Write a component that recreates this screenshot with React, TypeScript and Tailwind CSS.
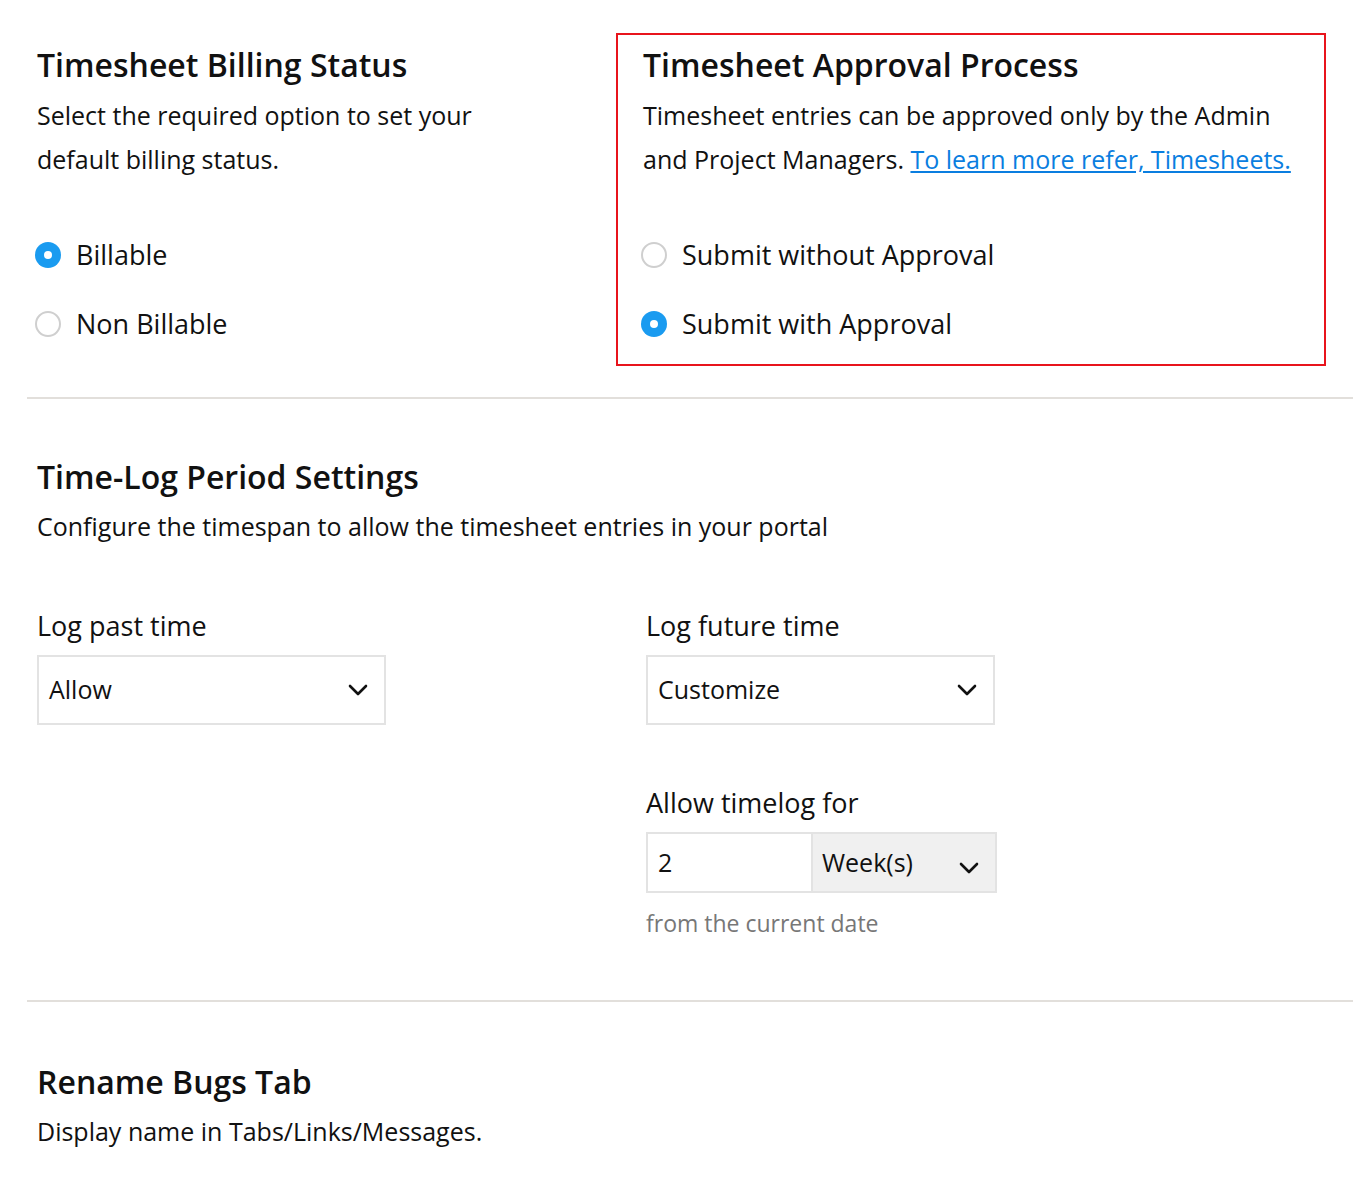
import React from "react";

function Radio({ checked }: { checked: boolean }) {
  return checked ? (
    <span className="flex h-[26px] w-[26px] shrink-0 items-center justify-center rounded-full bg-[#1a9bf0]">
      <span className="h-[8px] w-[8px] rounded-full bg-white" />
    </span>
  ) : (
    <span className="h-[26px] w-[26px] shrink-0 rounded-full border-2 border-[#cfcfcf] bg-white" />
  );
}

function Chevron({ className = "" }: { className?: string }) {
  return (
    <svg className={className} width="20" height="12" viewBox="0 0 20 12" fill="none">
      <path d="M2 2l8 8 8-8" stroke="#111" strokeWidth="2.6" strokeLinecap="round" strokeLinejoin="round" />
    </svg>
  );
}

function RadioRow({ checked, label }: { checked: boolean; label: string }) {
  return (
    <div className="-ml-[2px] flex h-[44px] items-center gap-[15px]">
      <Radio checked={checked} />
      <span className="text-[27px] leading-[44px]">{label}</span>
    </div>
  );
}

export default function App() {
  return (
    <div
      className="min-h-[1193px] bg-white pl-[27px] pr-[7px] text-[#111]"
      style={{ fontFamily: "'Open Sans', Lato, sans-serif" }}
    >
      {/* Section 1 */}
      <div className="flex pt-[33px]">
        <div className="w-[589px] pl-[10px] pt-[14px]">
          <h2 className="text-[32px] font-semibold leading-[36px]">Timesheet Billing Status</h2>
          <p className="mt-[10px] text-[25px] leading-[44px]">
            Select the required option to set your
            <br />
            default billing status.
          </p>
          <div className="mt-[52px] flex flex-col gap-[25px]">
            <RadioRow checked label="Billable" />
            <RadioRow checked={false} label="Non Billable" />
          </div>
        </div>
        <div className="w-[710px] border-2 border-[#e8141c] pb-[18px] pl-[25px] pt-[12px]">
          <h2 className="text-[32px] font-semibold leading-[36px]">Timesheet Approval Process</h2>
          <p className="mt-[10px] text-[25px] leading-[44px]">
            Timesheet entries can be approved only by the Admin
            <br />
            and Project Managers.{" "}
            <a href="#" className="text-[#0a7ee0] underline">
              To learn more refer, Timesheets.
            </a>
          </p>
          <div className="mt-[52px] flex flex-col gap-[25px]">
            <RadioRow checked={false} label="Submit without Approval" />
            <RadioRow checked label="Submit with Approval" />
          </div>
        </div>
      </div>

      <div className="mt-[31px] h-[2px] bg-[#e2dfdb]" />

      {/* Section 2 */}
      <div className="pl-[10px] pt-[60px]">
        <h2 className="text-[32px] font-semibold leading-[36px]">Time-Log Period Settings</h2>
        <p className="mt-[9px] text-[25px] leading-[44px]">
          Configure the timespan to allow the timesheet entries in your portal
        </p>
        <div className="mt-[56px] grid grid-cols-[609px_1fr]">
          <div>
            <div className="text-[27px] leading-[44px]">Log past time</div>
            <div className="mt-[7px] flex h-[70px] w-[349px] items-center justify-between border-2 border-[#e3e3e3] pl-[10px] pr-[16px]">
              <span className="text-[25px]">Allow</span>
              <Chevron />
            </div>
          </div>
          <div>
            <div className="text-[27px] leading-[44px]">Log future time</div>
            <div className="mt-[7px] flex h-[70px] w-[349px] items-center justify-between border-2 border-[#e3e3e3] pl-[10px] pr-[16px]">
              <span className="text-[25px]">Customize</span>
              <Chevron />
            </div>
            <div className="mt-[56px] text-[27px] leading-[44px]">Allow timelog for</div>
            <div className="mt-[7px] flex h-[61px] w-[351px]">
              <div className="flex w-[167px] items-center border-2 border-[#e3e3e3] pl-[10px] text-[25px]">2</div>
              <div className="flex flex-1 items-center justify-between border-2 border-l-0 border-[#e3e3e3] bg-[#f0f0f0] pl-[9px] pr-[16px]">
                <span className="text-[25px]">Week(s)</span>
                <Chevron className="mt-[10px]" />
              </div>
            </div>
            <div className="mt-[8px] text-[23px] leading-[44px] text-[#777]">from the current date</div>
          </div>
        </div>
      </div>

      <div className="mt-[55px] h-[2px] bg-[#e2dfdb]" />

      {/* Section 3 */}
      <div className="pl-[10px] pt-[62px]">
        <h2 className="text-[32px] font-semibold leading-[36px]">Rename Bugs Tab</h2>
        <p className="mt-[9px] text-[25px] leading-[44px]">Display name in Tabs/Links/Messages.</p>
      </div>
    </div>
  );
}
